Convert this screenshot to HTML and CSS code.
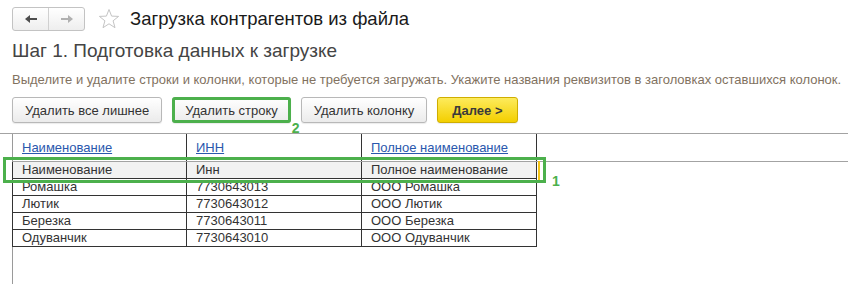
FILE: index.html
```html
<!DOCTYPE html>
<html>

<head>
  <title>Загрузка контрагентов из файла</title>
  <meta name="viewport" content="width=device-width, initial-scale=1">
  <link rel="stylesheet" href="styles.css">
</head>

<body>
  <div class="topbar">
    <div class="nav">
      <span class="nav-btn">
        <svg width="12" height="8" viewBox="0 0 12 8"><path d="M0 4 L5 0 L5 3 L12 3 L12 5 L5 5 L5 8 Z" fill="#4d4d4d"/></svg>
      </span>
      <span class="nav-btn">
        <svg width="12" height="8" viewBox="0 0 12 8"><path d="M12 4 L7 0 L7 3 L0 3 L0 5 L7 5 L7 8 Z" fill="#b0b0b0"/></svg>
      </span>
    </div>
    <svg class="star" width="22" height="22" viewBox="0 0 22 22">
      <polygon points="11,1.5 13.6,8.1 20.6,8.4 15.1,12.8 17,19.7 11,15.8 5,19.7 6.9,12.8 1.4,8.4 8.4,8.1"
        fill="none" stroke="#c4c4c4" stroke-width="1" stroke-linejoin="round"/>
    </svg>
    <h1>Загрузка контрагентов из файла</h1>
  </div>

  <h2 class="step">Шаг 1. Подготовка данных к загрузке</h2>
  <p class="hint">Выделите и удалите строки и колонки, которые не требуется загружать. Укажите названия реквизитов в заголовках оставшихся колонок.</p>

  <div class="toolbar">
    <button class="btn">Удалить все лишнее</button>
    <span class="mark-wrap">
      <button class="btn marked">Удалить строку</button>
      <span class="mark-num num-2">2</span>
    </span>
    <button class="btn">Удалить колонку</button>
    <button class="btn btn-default">Далее &gt;</button>
  </div>

  <div class="grid">
    <div class="grid-body">
      <div class="grid-head">
        <div class="head-cell c1"><a href="#">Наименование</a></div>
        <div class="head-cell c2"><a href="#">ИНН</a></div>
        <div class="head-cell c3"><a href="#">Полное наименование</a></div>
      </div>
      <table class="rows">
        <colgroup>
          <col class="c1"><col class="c2"><col class="c3">
        </colgroup>
        <tr class="current">
          <td>Наименование</td><td>Инн</td><td class="cursor">Полное наименование</td>
        </tr>
        <tr><td>Ромашка</td><td>7730643013</td><td>ООО Ромашка</td></tr>
        <tr><td>Лютик</td><td>7730643012</td><td>ООО Лютик</td></tr>
        <tr><td>Березка</td><td>7730643011</td><td>ООО Березка</td></tr>
        <tr><td>Одуванчик</td><td>7730643010</td><td>ООО Одуванчик</td></tr>
      </table>
    </div>
    <div class="row-mark"></div>
    <span class="mark-num num-1">1</span>
  </div>
</body>

</html>
```

FILE: styles.css
```css
html {
  font-family: "Liberation Sans", Arial, sans-serif;
}

body {
  margin: 0;
  color: #333;
  height: 284px;
  overflow: hidden;
}

.topbar {
  display: flex;
  align-items: center;
  height: 24px;
  padding: 7px 0 0 12px;
}

.nav {
  display: flex;
  height: 24px;
  box-sizing: border-box;
  border: 1px solid #c3c3c3;
  border-radius: 3px;
  background: linear-gradient(#ffffff, #eeeeee);
}

.nav-btn {
  display: flex;
  align-items: center;
  justify-content: center;
  width: 35px;
}

.nav-btn + .nav-btn {
  border-left: 1px solid #d0d0d0;
}

.star {
  margin-left: 13px;
}

h1 {
  margin: 0 0 0 10px;
  font-size: 18.5px;
  font-weight: normal;
  color: #1a1a1a;
}

.step {
  margin: 7px 0 0 12px;
  font-size: 19px;
  line-height: 26px;
  font-weight: normal;
  color: #444;
}

.hint {
  margin: 8px 0 0 12px;
  font-size: 13px;
  line-height: 16px;
  color: #82725f;
}

.toolbar {
  display: flex;
  gap: 10px;
  margin: 9px 0 0 12px;
}

.btn {
  height: 26px;
  padding: 0 12px;
  font-family: inherit;
  font-size: 13px;
  color: #333;
  border: 1px solid #b8b8b8;
  border-radius: 3px;
  background: linear-gradient(#ffffff, #ebebeb);
  box-shadow: 0 1px 1px rgba(0, 0, 0, .08);
}

.btn-default {
  padding: 0 14px;
  font-weight: bold;
  color: #3a3a3a;
  border-color: #cfae00;
  background: linear-gradient(#fdeb5c, #f3cf00);
}

.mark-wrap {
  position: relative;
  display: flex;
}

.marked {
  outline: 3px solid #4cb04c;
  outline-offset: -3px;
}

.mark-num {
  position: absolute;
  font-size: 14px;
  line-height: 14px;
  font-weight: bold;
  color: #4cb04c;
}

.num-2 {
  left: calc(100% + 1px);
  top: 24px;
}

.num-1 {
  left: 552px;
  top: 40px;
}

.grid {
  position: relative;
  margin-top: 10px;
  border-top: 1px solid #a3a3a3;
  height: 160px;
}

.grid-body {
  margin-left: 12px;
  height: 100%;
  border-left: 1px solid #9a9a9a;
}

.grid-head {
  display: flex;
  height: 27px;
  border-bottom: 1px solid #a3a3a3;
}

.head-cell {
  box-sizing: border-box;
  display: flex;
  align-items: center;
  padding-left: 9px;
  border-right: 1px solid #333;
  font-size: 13px;
}

.head-cell.c1 { width: 174px; }
.head-cell.c2 { width: 175px; }
.head-cell.c3 { width: 175px; }

.head-cell a {
  color: #2a58ad;
}

.rows {
  margin-left: -1px;
  border-collapse: separate;
  border-spacing: 0;
  table-layout: fixed;
  font-size: 13px;
}

col.c1 { width: 175px; }
col.c2 { width: 175px; }
col.c3 { width: 175px; }

.rows td {
  box-sizing: border-box;
  height: 17px;
  padding: 0 0 0 9px;
  line-height: 16px;
  border-right: 1px solid #333;
  border-bottom: 1px solid #333;
  white-space: nowrap;
  color: #333;
}

.rows td:first-child {
  border-left: 1px solid #333;
  padding-left: 9px;
}

.rows .current td {
  background: #f2f2f2;
}

.cursor {
  position: relative;
}

.cursor::after {
  content: "";
  position: absolute;
  right: -4px;
  top: -1px;
  width: 2px;
  height: 20px;
  background: #f5c518;
}

.row-mark {
  position: absolute;
  left: 3px;
  top: 23px;
  width: 543px;
  height: 26px;
  box-sizing: border-box;
  border: 3px solid #4cb04c;
}
```
